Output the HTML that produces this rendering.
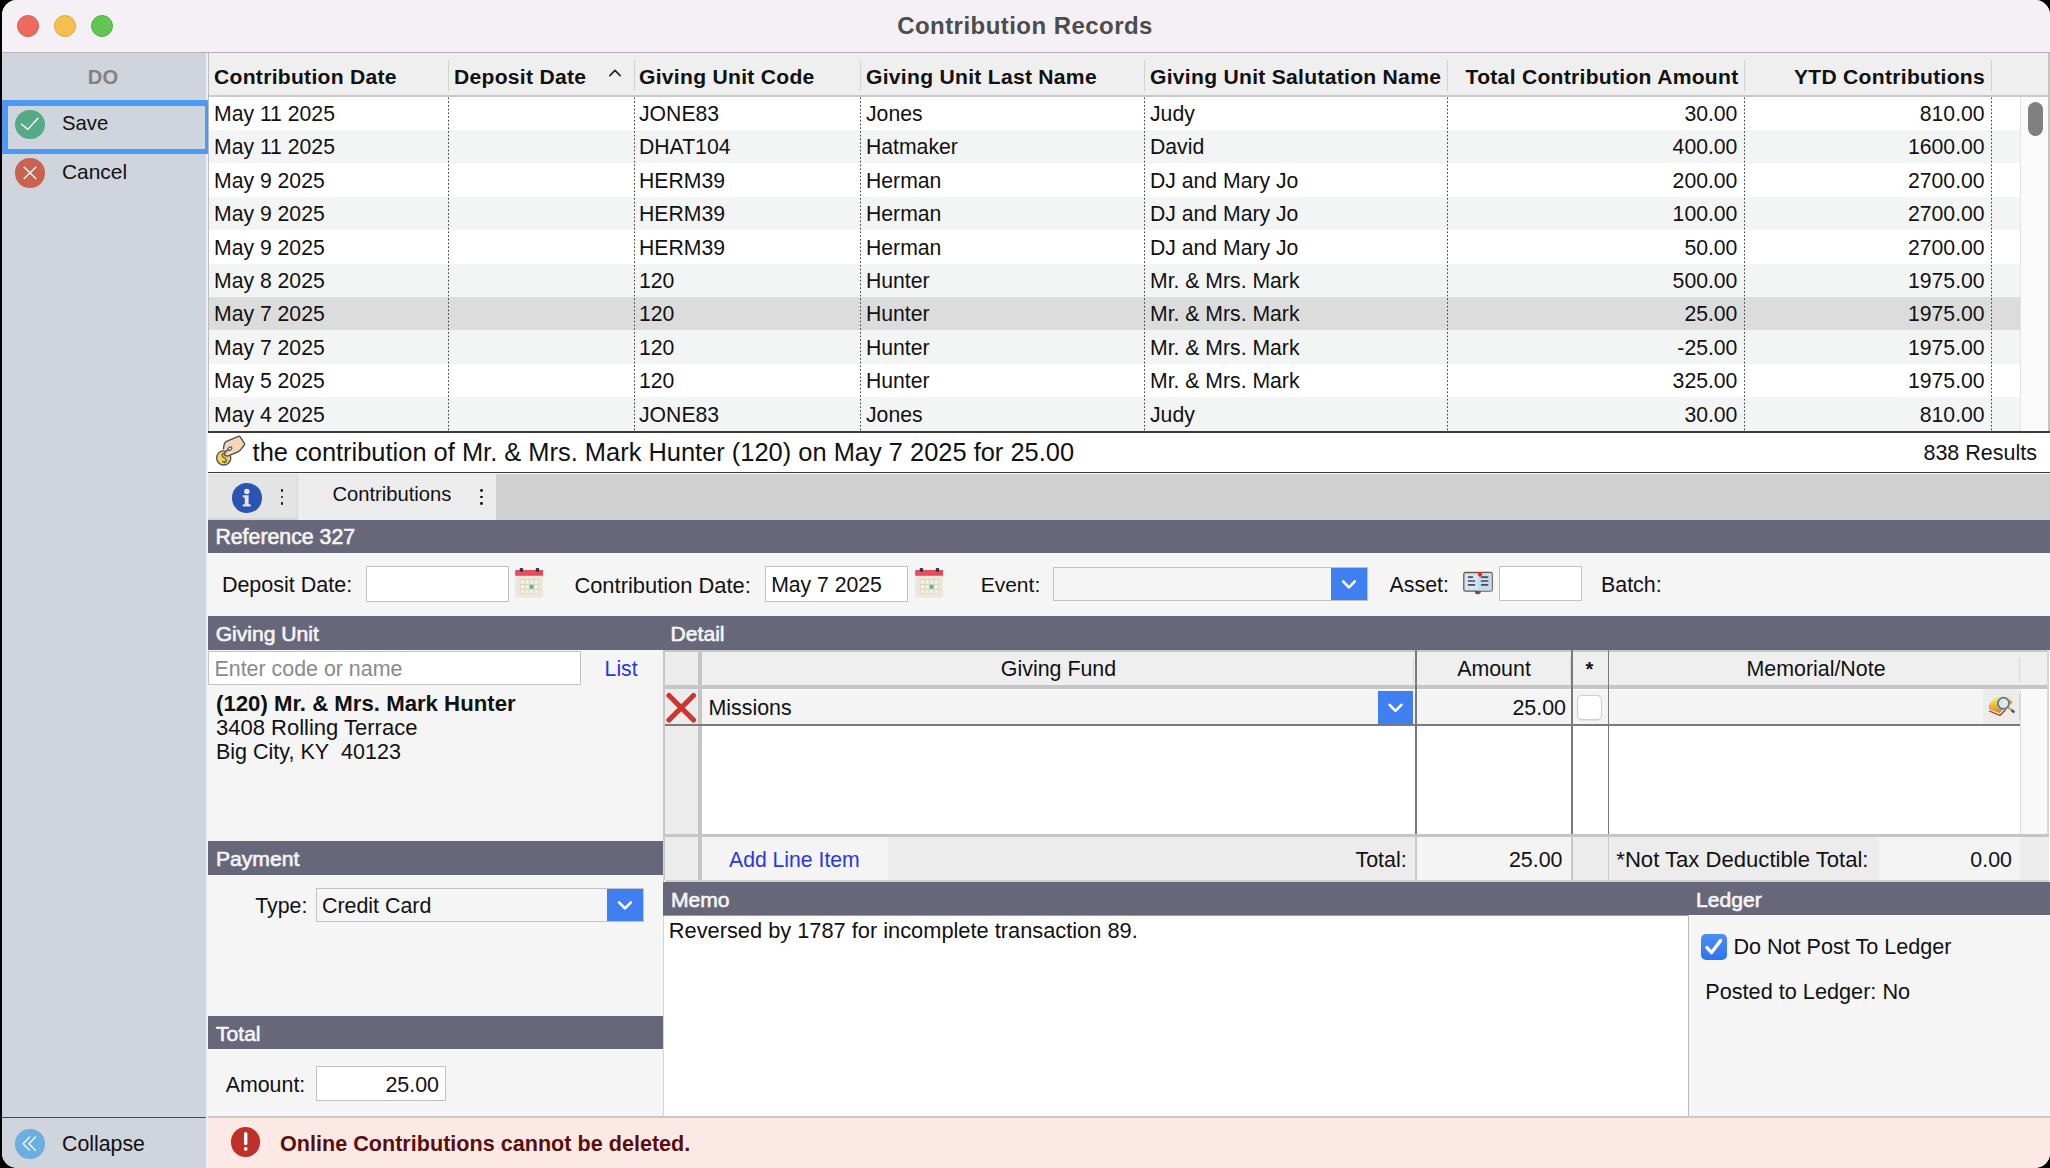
<!DOCTYPE html>
<html><head><meta charset="utf-8"><title>Contribution Records</title>
<style>
html,body{margin:0;padding:0;}
body{width:2050px;height:1168px;background:#000;position:relative;overflow:hidden;font-family:"Liberation Sans",sans-serif;color:#111;}
#clip{position:absolute;left:2px;top:0;width:2048px;height:1168px;border-radius:15px;overflow:hidden;background:#f5f5f5;}
#win{position:absolute;left:0;top:0;width:2050px;height:53px;}
.r{position:absolute;}
.t{position:absolute;white-space:nowrap;}
</style></head><body>
<div id="clip"><div style="position:absolute;left:-2px;top:0;width:2050px;height:1168px;">
<div id="win">
<div class="r" style="left:0px;top:0px;width:2050px;height:52px;background:#f4f0f5;"></div>
<div class="r" style="left:0px;top:52px;width:2050px;height:1px;background:#b4b1b6;"></div>
<div class="r" style="left:17px;top:14.5px;width:22px;height:22px;background:#ed6a5e;border-radius:50%;box-sizing:border-box;border:1px solid #d9574c;"></div>
<div class="r" style="left:54px;top:14.5px;width:22px;height:22px;background:#f5bf4f;border-radius:50%;box-sizing:border-box;border:1px solid #dfa63d;"></div>
<div class="r" style="left:91px;top:14.5px;width:22px;height:22px;background:#62c554;border-radius:50%;box-sizing:border-box;border:1px solid #50ae44;"></div>
<div class="t" style="top:11.88px;font-size:24px;line-height:27.6px;font-weight:bold;color:#4c4c4c;left:425px;width:1200px;text-align:center;letter-spacing:0.45px;">Contribution Records</div>
</div>
<div class="r" style="left:2px;top:53px;width:204px;height:1115px;background:#d0d4dc;"></div>
<div class="r" style="left:206px;top:53px;width:2px;height:1115px;background:#eef0f3;"></div>
<div class="t" style="top:66.19px;font-size:20.2px;line-height:23.23px;font-weight:bold;color:#828282;left:-497px;width:1200px;text-align:center;">DO</div>
<div class="r" style="left:2px;top:100px;width:208px;height:53.5px;box-sizing:border-box;border:5.5px solid #4b9bf6;border-top-width:6px;border-left-width:6px;"></div>
<div class="r" style="left:15.2px;top:109.6px;width:29.6px;height:29.6px;background:#57aa88;border-radius:50%;"></div>
<svg class="r" style="left:15px;top:110px" width="30" height="30" viewBox="0 0 30 30"><path d="M6.6 14.3 L12.8 19.4 L23 8.3" fill="none" stroke="#fff" stroke-width="1.4" stroke-linecap="round" stroke-linejoin="round"/></svg>
<div class="t" style="top:111.50px;font-size:20.3px;line-height:23.34px;left:62px;">Save</div>
<div class="r" style="left:15.2px;top:158.1px;width:29.6px;height:29.6px;background:#c9634f;border-radius:50%;"></div>
<svg class="r" style="left:15px;top:158px" width="30" height="30" viewBox="0 0 30 30"><path d="M9.2 9.2 L20.8 20.6 M20.8 9.2 L9.2 20.6" fill="none" stroke="#fff" stroke-width="1.4" stroke-linecap="round"/></svg>
<div class="t" style="top:159.64px;font-size:20.9px;line-height:24.03px;left:62px;">Cancel</div>
<div class="r" style="left:2px;top:1116.5px;width:204px;height:1.5px;background:#4a4a4a;"></div>
<div class="r" style="left:15px;top:1129px;width:29.5px;height:29.5px;background:#6aaee2;border-radius:50%;"></div>
<svg class="r" style="left:15px;top:1129px" width="30" height="30" viewBox="0 0 30 30"><path d="M14.6 8 L8.1 14.7 L14.6 21.4 M20.4 8 L13.9 14.7 L20.4 21.4" fill="none" stroke="#fff" stroke-width="1.3" stroke-linecap="round" stroke-linejoin="miter"/></svg>
<div class="t" style="top:1132.07px;font-size:21.3px;line-height:24.49px;left:62px;">Collapse</div>
<div class="r" style="left:208px;top:53px;width:1842px;height:378px;background:#ffffff;"></div>
<div class="r" style="left:208px;top:53px;width:1px;height:378px;background:#bdbdbd;"></div>
<div class="r" style="left:209px;top:53px;width:1841px;height:43px;background:#efefef;"></div>
<div class="r" style="left:209px;top:95px;width:1841px;height:1.5px;background:#c9c9c9;"></div>
<div class="r" style="left:2048px;top:53px;width:2px;height:378px;background:#c4c4c4;"></div>
<div class="r" style="left:448px;top:59.5px;width:1px;height:31px;background:#d2d2d2;"></div>
<div class="r" style="left:634px;top:59.5px;width:1px;height:31px;background:#d2d2d2;"></div>
<div class="r" style="left:860px;top:59.5px;width:1px;height:31px;background:#d2d2d2;"></div>
<div class="r" style="left:1144px;top:59.5px;width:1px;height:31px;background:#d2d2d2;"></div>
<div class="r" style="left:1447px;top:59.5px;width:1px;height:31px;background:#d2d2d2;"></div>
<div class="r" style="left:1744px;top:59.5px;width:1px;height:31px;background:#d2d2d2;"></div>
<div class="r" style="left:1991px;top:59.5px;width:1px;height:31px;background:#d2d2d2;"></div>
<div class="t" style="top:65.25px;font-size:21.1px;line-height:24.27px;font-weight:bold;left:214px;letter-spacing:0.28px;">Contribution Date</div>
<div class="t" style="top:65.25px;font-size:21.1px;line-height:24.27px;font-weight:bold;left:454px;letter-spacing:0.28px;">Deposit Date</div>
<div class="t" style="top:65.25px;font-size:21.1px;line-height:24.27px;font-weight:bold;left:639px;letter-spacing:0.28px;">Giving Unit Code</div>
<div class="t" style="top:65.25px;font-size:21.1px;line-height:24.27px;font-weight:bold;left:866px;letter-spacing:0.28px;">Giving Unit Last Name</div>
<div class="t" style="top:65.25px;font-size:21.1px;line-height:24.27px;font-weight:bold;left:1150px;letter-spacing:0.28px;">Giving Unit Salutation Name</div>
<div class="t" style="top:65.25px;font-size:21.1px;line-height:24.27px;font-weight:bold;right:311.5px;letter-spacing:0.28px;">Total Contribution Amount</div>
<div class="t" style="top:65.25px;font-size:21.1px;line-height:24.27px;font-weight:bold;right:65px;letter-spacing:0.28px;">YTD Contributions</div>
<svg class="r" style="left:606px;top:64px" width="18" height="16" viewBox="0 0 18 16"><path d="M3.8 11.6 L9 6.4 L14.2 11.6" fill="none" stroke="#222" stroke-width="1.6" stroke-linecap="round" stroke-linejoin="round"/></svg>
<div class="r" style="left:209px;top:96.6px;width:1811px;height:33.4px;background:#ffffff;"></div>
<div class="t" style="top:101.66px;font-size:21.2px;line-height:24.38px;left:214px;">May 11 2025</div>
<div class="t" style="top:101.66px;font-size:21.2px;line-height:24.38px;left:639px;">JONE83</div>
<div class="t" style="top:101.66px;font-size:21.2px;line-height:24.38px;left:866px;">Jones</div>
<div class="t" style="top:101.66px;font-size:21.2px;line-height:24.38px;left:1150px;">Judy</div>
<div class="t" style="top:101.66px;font-size:21.2px;line-height:24.38px;right:312.5999999999999px;">30.00</div>
<div class="t" style="top:101.66px;font-size:21.2px;line-height:24.38px;right:65.40000000000009px;">810.00</div>
<div class="r" style="left:209px;top:130.0px;width:1811px;height:33.4px;background:#f3f4f4;"></div>
<div class="t" style="top:135.13px;font-size:21.2px;line-height:24.38px;left:214px;">May 11 2025</div>
<div class="t" style="top:135.13px;font-size:21.2px;line-height:24.38px;left:639px;">DHAT104</div>
<div class="t" style="top:135.13px;font-size:21.2px;line-height:24.38px;left:866px;">Hatmaker</div>
<div class="t" style="top:135.13px;font-size:21.2px;line-height:24.38px;left:1150px;">David</div>
<div class="t" style="top:135.13px;font-size:21.2px;line-height:24.38px;right:312.5999999999999px;">400.00</div>
<div class="t" style="top:135.13px;font-size:21.2px;line-height:24.38px;right:65.40000000000009px;">1600.00</div>
<div class="r" style="left:209px;top:163.39999999999998px;width:1811px;height:33.4px;background:#ffffff;"></div>
<div class="t" style="top:168.60px;font-size:21.2px;line-height:24.38px;left:214px;">May 9 2025</div>
<div class="t" style="top:168.60px;font-size:21.2px;line-height:24.38px;left:639px;">HERM39</div>
<div class="t" style="top:168.60px;font-size:21.2px;line-height:24.38px;left:866px;">Herman</div>
<div class="t" style="top:168.60px;font-size:21.2px;line-height:24.38px;left:1150px;">DJ and Mary Jo</div>
<div class="t" style="top:168.60px;font-size:21.2px;line-height:24.38px;right:312.5999999999999px;">200.00</div>
<div class="t" style="top:168.60px;font-size:21.2px;line-height:24.38px;right:65.40000000000009px;">2700.00</div>
<div class="r" style="left:209px;top:196.79999999999998px;width:1811px;height:33.4px;background:#f3f4f4;"></div>
<div class="t" style="top:202.07px;font-size:21.2px;line-height:24.38px;left:214px;">May 9 2025</div>
<div class="t" style="top:202.07px;font-size:21.2px;line-height:24.38px;left:639px;">HERM39</div>
<div class="t" style="top:202.07px;font-size:21.2px;line-height:24.38px;left:866px;">Herman</div>
<div class="t" style="top:202.07px;font-size:21.2px;line-height:24.38px;left:1150px;">DJ and Mary Jo</div>
<div class="t" style="top:202.07px;font-size:21.2px;line-height:24.38px;right:312.5999999999999px;">100.00</div>
<div class="t" style="top:202.07px;font-size:21.2px;line-height:24.38px;right:65.40000000000009px;">2700.00</div>
<div class="r" style="left:209px;top:230.2px;width:1811px;height:33.4px;background:#ffffff;"></div>
<div class="t" style="top:235.54px;font-size:21.2px;line-height:24.38px;left:214px;">May 9 2025</div>
<div class="t" style="top:235.54px;font-size:21.2px;line-height:24.38px;left:639px;">HERM39</div>
<div class="t" style="top:235.54px;font-size:21.2px;line-height:24.38px;left:866px;">Herman</div>
<div class="t" style="top:235.54px;font-size:21.2px;line-height:24.38px;left:1150px;">DJ and Mary Jo</div>
<div class="t" style="top:235.54px;font-size:21.2px;line-height:24.38px;right:312.5999999999999px;">50.00</div>
<div class="t" style="top:235.54px;font-size:21.2px;line-height:24.38px;right:65.40000000000009px;">2700.00</div>
<div class="r" style="left:209px;top:263.6px;width:1811px;height:33.4px;background:#f3f4f4;"></div>
<div class="t" style="top:269.01px;font-size:21.2px;line-height:24.38px;left:214px;">May 8 2025</div>
<div class="t" style="top:269.01px;font-size:21.2px;line-height:24.38px;left:639px;">120</div>
<div class="t" style="top:269.01px;font-size:21.2px;line-height:24.38px;left:866px;">Hunter</div>
<div class="t" style="top:269.01px;font-size:21.2px;line-height:24.38px;left:1150px;">Mr. &amp; Mrs. Mark</div>
<div class="t" style="top:269.01px;font-size:21.2px;line-height:24.38px;right:312.5999999999999px;">500.00</div>
<div class="t" style="top:269.01px;font-size:21.2px;line-height:24.38px;right:65.40000000000009px;">1975.00</div>
<div class="r" style="left:209px;top:297.0px;width:1811px;height:33.4px;background:#dcdcdc;"></div>
<div class="t" style="top:302.48px;font-size:21.2px;line-height:24.38px;left:214px;">May 7 2025</div>
<div class="t" style="top:302.48px;font-size:21.2px;line-height:24.38px;left:639px;">120</div>
<div class="t" style="top:302.48px;font-size:21.2px;line-height:24.38px;left:866px;">Hunter</div>
<div class="t" style="top:302.48px;font-size:21.2px;line-height:24.38px;left:1150px;">Mr. &amp; Mrs. Mark</div>
<div class="t" style="top:302.48px;font-size:21.2px;line-height:24.38px;right:312.5999999999999px;">25.00</div>
<div class="t" style="top:302.48px;font-size:21.2px;line-height:24.38px;right:65.40000000000009px;">1975.00</div>
<div class="r" style="left:209px;top:330.4px;width:1811px;height:33.4px;background:#f3f4f4;"></div>
<div class="t" style="top:335.95px;font-size:21.2px;line-height:24.38px;left:214px;">May 7 2025</div>
<div class="t" style="top:335.95px;font-size:21.2px;line-height:24.38px;left:639px;">120</div>
<div class="t" style="top:335.95px;font-size:21.2px;line-height:24.38px;left:866px;">Hunter</div>
<div class="t" style="top:335.95px;font-size:21.2px;line-height:24.38px;left:1150px;">Mr. &amp; Mrs. Mark</div>
<div class="t" style="top:335.95px;font-size:21.2px;line-height:24.38px;right:312.5999999999999px;">-25.00</div>
<div class="t" style="top:335.95px;font-size:21.2px;line-height:24.38px;right:65.40000000000009px;">1975.00</div>
<div class="r" style="left:209px;top:363.79999999999995px;width:1811px;height:33.4px;background:#ffffff;"></div>
<div class="t" style="top:369.42px;font-size:21.2px;line-height:24.38px;left:214px;">May 5 2025</div>
<div class="t" style="top:369.42px;font-size:21.2px;line-height:24.38px;left:639px;">120</div>
<div class="t" style="top:369.42px;font-size:21.2px;line-height:24.38px;left:866px;">Hunter</div>
<div class="t" style="top:369.42px;font-size:21.2px;line-height:24.38px;left:1150px;">Mr. &amp; Mrs. Mark</div>
<div class="t" style="top:369.42px;font-size:21.2px;line-height:24.38px;right:312.5999999999999px;">325.00</div>
<div class="t" style="top:369.42px;font-size:21.2px;line-height:24.38px;right:65.40000000000009px;">1975.00</div>
<div class="r" style="left:209px;top:397.19999999999993px;width:1811px;height:33.4px;background:#f3f4f4;"></div>
<div class="t" style="top:402.89px;font-size:21.2px;line-height:24.38px;left:214px;">May 4 2025</div>
<div class="t" style="top:402.89px;font-size:21.2px;line-height:24.38px;left:639px;">JONE83</div>
<div class="t" style="top:402.89px;font-size:21.2px;line-height:24.38px;left:866px;">Jones</div>
<div class="t" style="top:402.89px;font-size:21.2px;line-height:24.38px;left:1150px;">Judy</div>
<div class="t" style="top:402.89px;font-size:21.2px;line-height:24.38px;right:312.5999999999999px;">30.00</div>
<div class="t" style="top:402.89px;font-size:21.2px;line-height:24.38px;right:65.40000000000009px;">810.00</div>
<svg class="r" style="left:446px;top:97px" width="4" height="334"><line x1="2.5" y1="0.6" x2="2.5" y2="334" stroke="#3a3a3a" stroke-width="1" stroke-dasharray="1.6 2.12"/></svg>
<svg class="r" style="left:632px;top:97px" width="4" height="334"><line x1="2.5" y1="0.6" x2="2.5" y2="334" stroke="#3a3a3a" stroke-width="1" stroke-dasharray="1.6 2.12"/></svg>
<svg class="r" style="left:858px;top:97px" width="4" height="334"><line x1="2.5" y1="0.6" x2="2.5" y2="334" stroke="#3a3a3a" stroke-width="1" stroke-dasharray="1.6 2.12"/></svg>
<svg class="r" style="left:1142px;top:97px" width="4" height="334"><line x1="2.5" y1="0.6" x2="2.5" y2="334" stroke="#3a3a3a" stroke-width="1" stroke-dasharray="1.6 2.12"/></svg>
<svg class="r" style="left:1445px;top:97px" width="4" height="334"><line x1="2.5" y1="0.6" x2="2.5" y2="334" stroke="#3a3a3a" stroke-width="1" stroke-dasharray="1.6 2.12"/></svg>
<svg class="r" style="left:1742px;top:97px" width="4" height="334"><line x1="2.5" y1="0.6" x2="2.5" y2="334" stroke="#3a3a3a" stroke-width="1" stroke-dasharray="1.6 2.12"/></svg>
<svg class="r" style="left:1989px;top:97px" width="4" height="334"><line x1="2.5" y1="0.6" x2="2.5" y2="334" stroke="#3a3a3a" stroke-width="1" stroke-dasharray="1.6 2.12"/></svg>
<div class="r" style="left:2020px;top:96.5px;width:28px;height:334.5px;background:#fafafa;"></div>
<div class="r" style="left:2020px;top:96.5px;width:1px;height:334.5px;background:#e3e3e3;"></div>
<div class="r" style="left:2028px;top:102px;width:15px;height:33.5px;background:#808080;border-radius:8px;"></div>
<div class="r" style="left:208px;top:431px;width:1842px;height:1.6px;background:#3a3a3a;"></div>
<div class="r" style="left:208px;top:432.5px;width:1842px;height:39.5px;background:#ffffff;"></div>
<div class="r" style="left:208px;top:471.7px;width:1842px;height:1.6px;background:#3a3a3a;"></div>
<svg class="r" style="left:205px;top:430px" width="50" height="45" viewBox="205 430 50 45">
<circle cx="223.7" cy="457.9" r="7.1" fill="#f6d24c" stroke="#4a525c" stroke-width="1.3"/>
<path d="M225.6 454.6 C224.6 452.9 221.6 453.3 222.2 455.8 C222.8 457.9 226.8 457.8 226.4 460.6 C226 462.6 223 462.4 222.2 461" fill="none" stroke="#4a525c" stroke-width="1.25"/>
<path d="M224.6 461.6 V463.2" stroke="#4a525c" stroke-width="1.2"/>
<path d="M223.4 449.5 C223.6 446 224.2 443 226 441.6 L237.7 436.6 C238.8 436 239.6 436 240.2 436.8 L244.4 443.3 C244.8 444 244.7 444.6 244.2 445.2 L239.8 450.6 C238 452.3 236.6 452.8 234.8 453.2 L229 455.6 C227.2 456.2 225.2 456.2 224.6 454.8 C224 453.4 225 452.2 226.4 451 L228.2 449.4" fill="#f4d7b8" stroke="#4a525c" stroke-width="1.4" stroke-linejoin="round"/>
<ellipse cx="229.9" cy="448.6" rx="2.3" ry="1.3" transform="rotate(-35 229.9 448.6)" fill="#ffffff" stroke="#4a525c" stroke-width="1.2"/>
</svg>
<div class="t" style="top:437.85px;font-size:25.45px;line-height:29.27px;left:252.6px;">the contribution of Mr. &amp; Mrs. Mark Hunter (120) on May 7 2025 for 25.00</div>
<div class="t" style="top:441.49px;font-size:21.5px;line-height:24.72px;right:13px;">838 Results</div>
<div class="r" style="left:208px;top:473.5px;width:1842px;height:46.5px;background:#d0d0d0;"></div>
<div class="r" style="left:208px;top:473.5px;width:89.5px;height:46.5px;background:#e4e4e4;"></div>
<div class="r" style="left:297.5px;top:473.5px;width:198.5px;height:46.5px;background:#ececec;"></div>
<div class="r" style="left:208px;top:518px;width:89.5px;height:2px;background:#d6d6d6;"></div>
<div class="r" style="left:296.5px;top:475px;width:1.2px;height:45px;background:#d4d4d4;"></div>
<div class="r" style="left:232.0px;top:483.0px;width:29.6px;height:29.6px;background:#2a53b2;border-radius:50%;"></div>
<svg class="r" style="left:232px;top:483px" width="30" height="30" viewBox="0 0 30 30"><circle cx="14.8" cy="8.4" r="2.7" fill="#e6e6e6"/><path d="M10.8 12.2 H16.6 V21.2 H18.6 V23.4 H10.8 V21.2 H12.8 V14.4 H10.8 Z" fill="#e6e6e6"/></svg>
<div class="r" style="left:280.55px;top:488.75px;width:2.9px;height:2.9px;background:#111;border-radius:50%;"></div>
<div class="r" style="left:280.55px;top:495.55px;width:2.9px;height:2.9px;background:#111;border-radius:50%;"></div>
<div class="r" style="left:280.55px;top:502.35px;width:2.9px;height:2.9px;background:#111;border-radius:50%;"></div>
<div class="r" style="left:480.15000000000003px;top:488.75px;width:2.9px;height:2.9px;background:#111;border-radius:50%;"></div>
<div class="r" style="left:480.15000000000003px;top:495.55px;width:2.9px;height:2.9px;background:#111;border-radius:50%;"></div>
<div class="r" style="left:480.15000000000003px;top:502.35px;width:2.9px;height:2.9px;background:#111;border-radius:50%;"></div>
<div class="t" style="top:483.09px;font-size:20.2px;line-height:23.23px;left:332.4px;">Contributions</div>
<div class="r" style="left:208px;top:520px;width:1842px;height:33px;background:#686779;"></div>
<div class="t" style="top:525.27px;font-size:21.3px;line-height:24.49px;color:#f4f4f6;left:215.4px;-webkit-text-stroke:0.65px #f4f4f6;">Reference 327</div>
<div class="r" style="left:208px;top:553px;width:1842px;height:63px;background:#f5f5f5;"></div>
<div class="t" style="top:572.89px;font-size:21.5px;line-height:24.72px;left:221.9px;">Deposit Date:</div>
<div class="r" style="left:366px;top:566px;width:143px;height:36px;background:#ffffff;box-sizing:border-box;border:1px solid #c2c2c2;"></div>
<svg class="r" style="left:515px;top:568px" width="30" height="31" viewBox="0 0 30 31">
<rect x="0.2" y="7.8" width="27.8" height="21.8" fill="#ebe8da"/>
<rect x="4.8" y="11.3" width="18.9" height="14.6" fill="#d9d3bd"/>
<rect x="5.60" y="12.20" width="3.6" height="3.75" fill="#f3f0e4"/><rect x="10.20" y="12.20" width="3.6" height="3.75" fill="#f3f0e4"/><rect x="14.80" y="12.20" width="3.6" height="3.75" fill="#f3f0e4"/><rect x="19.40" y="12.20" width="3.6" height="3.75" fill="#f3f0e4"/><rect x="5.60" y="16.95" width="3.6" height="3.75" fill="#f3f0e4"/><rect x="10.20" y="16.95" width="3.6" height="3.75" fill="#f3f0e4"/><rect x="14.80" y="16.95" width="3.6" height="3.75" fill="#4db897"/><rect x="19.40" y="16.95" width="3.6" height="3.75" fill="#f3f0e4"/><rect x="5.60" y="21.70" width="3.6" height="3.75" fill="#f3f0e4"/><rect x="10.20" y="21.70" width="3.6" height="3.75" fill="#f3f0e4"/><rect x="14.80" y="21.70" width="3.6" height="3.75" fill="#f3f0e4"/><rect x="19.40" y="21.70" width="3.6" height="3.75" fill="#f3f0e4"/>
<rect x="0.2" y="2" width="27.8" height="5.8" fill="#e84a5a"/>
<rect x="4.8" y="0.1" width="3.3" height="3.5" fill="#25324a"/>
<rect x="20.8" y="0.1" width="3.3" height="3.5" fill="#25324a"/>
</svg>
<div class="t" style="top:572.52px;font-size:21.9px;line-height:25.18px;left:574.4px;">Contribution Date:</div>
<div class="r" style="left:765px;top:566px;width:143px;height:36px;background:#ffffff;box-sizing:border-box;border:1px solid #c2c2c2;"></div>
<div class="t" style="top:573.16px;font-size:21.2px;line-height:24.38px;left:771.2px;">May 7 2025</div>
<svg class="r" style="left:914.5px;top:568px" width="30" height="31" viewBox="0 0 30 31">
<rect x="0.2" y="7.8" width="27.8" height="21.8" fill="#ebe8da"/>
<rect x="4.8" y="11.3" width="18.9" height="14.6" fill="#d9d3bd"/>
<rect x="5.60" y="12.20" width="3.6" height="3.75" fill="#f3f0e4"/><rect x="10.20" y="12.20" width="3.6" height="3.75" fill="#f3f0e4"/><rect x="14.80" y="12.20" width="3.6" height="3.75" fill="#f3f0e4"/><rect x="19.40" y="12.20" width="3.6" height="3.75" fill="#f3f0e4"/><rect x="5.60" y="16.95" width="3.6" height="3.75" fill="#f3f0e4"/><rect x="10.20" y="16.95" width="3.6" height="3.75" fill="#f3f0e4"/><rect x="14.80" y="16.95" width="3.6" height="3.75" fill="#4db897"/><rect x="19.40" y="16.95" width="3.6" height="3.75" fill="#f3f0e4"/><rect x="5.60" y="21.70" width="3.6" height="3.75" fill="#f3f0e4"/><rect x="10.20" y="21.70" width="3.6" height="3.75" fill="#f3f0e4"/><rect x="14.80" y="21.70" width="3.6" height="3.75" fill="#f3f0e4"/><rect x="19.40" y="21.70" width="3.6" height="3.75" fill="#f3f0e4"/>
<rect x="0.2" y="2" width="27.8" height="5.8" fill="#e84a5a"/>
<rect x="4.8" y="0.1" width="3.3" height="3.5" fill="#25324a"/>
<rect x="20.8" y="0.1" width="3.3" height="3.5" fill="#25324a"/>
</svg>
<div class="t" style="top:573.35px;font-size:21px;line-height:24.15px;left:980.7px;">Event:</div>
<div class="r" style="left:1053px;top:566.5px;width:315px;height:34.5px;background:#f5f5f5;box-sizing:border-box;border:1.6px solid #c2c2c2;"></div>
<div class="r" style="left:1331px;top:568px;width:36px;height:32px;background:#3f7ff0;"></div>
<svg class="r" style="left:1331px;top:568px" width="36" height="32" viewBox="0 0 36 32"><path d="M12.1 13.4 L18.0 19.4 L23.9 13.4" fill="none" stroke="#fff" stroke-width="2.6" stroke-linecap="round" stroke-linejoin="round"/></svg>
<div class="t" style="top:572.98px;font-size:21.4px;line-height:24.61px;left:1389.5px;">Asset:</div>
<svg class="r" style="left:1460px;top:568px" width="36" height="28" viewBox="1460 568 36 28">
<circle cx="1477.8" cy="591.2" r="3.1" fill="#6a5a42"/>
<rect x="1463.8" y="572.5" width="28.4" height="18.6" rx="1.6" fill="#d3e5f6" stroke="#6f5c40" stroke-width="1.3"/>
<rect x="1478" y="573.2" width="13.5" height="17.3" fill="#c3dbf2"/>
<path d="M1478 572 H1482 V575.6 L1480 577 L1478 575.6 Z" fill="#d23a1e"/>
<g stroke="#4a4a52" stroke-width="1.7" stroke-linecap="round">
<path d="M1468.6 577.1 H1472.4 M1468.6 581 H1474.5 M1468.6 584.9 H1474.5 M1481.6 577.1 H1487.6 M1481.6 581 H1487.6 M1481.6 584.9 H1487.6"/>
</g>
</svg>
<div class="r" style="left:1498.8px;top:566px;width:83.0px;height:35.299999999999955px;background:#ffffff;box-sizing:border-box;border:1px solid #c2c2c2;"></div>
<div class="t" style="top:572.98px;font-size:21.4px;line-height:24.61px;left:1601px;">Batch:</div>
<div class="r" style="left:208px;top:616px;width:1842px;height:34px;background:#686779;"></div>
<div class="t" style="top:621.75px;font-size:21.1px;line-height:24.27px;color:#f4f4f6;left:215.7px;-webkit-text-stroke:0.65px #f4f4f6;">Giving Unit</div>
<div class="t" style="top:621.75px;font-size:21.1px;line-height:24.27px;color:#f4f4f6;left:670.6px;-webkit-text-stroke:0.65px #f4f4f6;">Detail</div>
<div class="r" style="left:208px;top:650px;width:455.5px;height:191px;background:#f5f5f5;"></div>
<div class="r" style="left:208.4px;top:650.6px;width:372.6px;height:34.19999999999993px;background:#ffffff;box-sizing:border-box;border:1px solid #c2c2c2;"></div>
<div class="t" style="top:656.98px;font-size:21.4px;line-height:24.61px;color:#8a8a8a;left:214.5px;">Enter code or name</div>
<div class="t" style="top:657.16px;font-size:21.2px;line-height:24.38px;color:#2737e4;left:604.6px;">List</div>
<div class="t" style="top:691.24px;font-size:22.2px;line-height:25.53px;font-weight:bold;left:216px;">(120) Mr. &amp; Mrs. Mark Hunter</div>
<div class="t" style="top:715.23px;font-size:22px;line-height:25.3px;left:216px;">3408 Rolling Terrace</div>
<div class="t" style="top:740.09px;font-size:21.5px;line-height:24.72px;left:216px;">Big City, KY&nbsp; 40123</div>
<div class="r" style="left:663.5px;top:650px;width:1386.5px;height:232px;background:#ffffff;"></div>
<div class="r" style="left:663px;top:650px;width:2px;height:230px;background:#c6c6c6;"></div>
<div class="r" style="left:664.5px;top:650px;width:1384px;height:35.5px;background:#efefef;"></div>
<div class="r" style="left:664.5px;top:650px;width:34px;height:230px;background:#ececec;"></div>
<div class="r" style="left:698px;top:650px;width:4px;height:230px;background:#c5c5c5;"></div>
<div class="r" style="left:664.5px;top:685px;width:1384px;height:4px;background:#c5c5c5;"></div>
<div class="r" style="left:663px;top:650px;width:1385px;height:2px;background:#c6c6c6;"></div>
<div class="r" style="left:702px;top:690px;width:1318px;height:35px;background:#f4f4f4;"></div>
<div class="r" style="left:664.5px;top:724px;width:1355.5px;height:1.6px;background:#7a7a7a;"></div>
<div class="r" style="left:2020px;top:690px;width:28px;height:145px;background:#f8f8f8;"></div>
<div class="r" style="left:2020px;top:690px;width:1px;height:145px;background:#dedede;"></div>
<div class="r" style="left:2047px;top:650px;width:1.5px;height:230px;background:#d6d6d6;"></div>
<div class="r" style="left:1415px;top:650px;width:1.6px;height:230px;background:#7a7a7a;"></div>
<div class="r" style="left:1571.2px;top:650px;width:1.6px;height:230px;background:#7a7a7a;"></div>
<div class="r" style="left:1607.7px;top:650px;width:1.6px;height:230px;background:#7a7a7a;"></div>
<div class="r" style="left:1413.2px;top:657px;width:1px;height:26px;background:#d8d8d8;"></div>
<div class="r" style="left:1569.5px;top:657px;width:1px;height:26px;background:#d8d8d8;"></div>
<div class="r" style="left:2019px;top:657px;width:1px;height:26px;background:#d8d8d8;"></div>
<div class="t" style="top:656.98px;font-size:21.4px;line-height:24.61px;left:458.5px;width:1200px;text-align:center;">Giving Fund</div>
<div class="t" style="top:656.98px;font-size:21.4px;line-height:24.61px;left:894px;width:1200px;text-align:center;">Amount</div>
<div class="t" style="top:657.77px;font-size:20px;line-height:23.0px;font-weight:bold;left:989.5px;width:1200px;text-align:center;">*</div>
<div class="t" style="top:656.98px;font-size:21.4px;line-height:24.61px;left:1216px;width:1200px;text-align:center;">Memorial/Note</div>
<svg class="r" style="left:666px;top:692px" width="32" height="32" viewBox="0 0 32 32"><path d="M3 3.5 L27.5 28 M27.5 3.5 L3 28" fill="none" stroke="#cf3430" stroke-width="5.2" stroke-linecap="round"/></svg>
<div class="t" style="top:695.98px;font-size:21.4px;line-height:24.61px;left:708.5px;">Missions</div>
<div class="r" style="left:1378px;top:691.2px;width:35px;height:32.8px;background:#3f7ff0;"></div>
<svg class="r" style="left:1378px;top:691.2px" width="35" height="32.8" viewBox="0 0 35 32.8"><path d="M11.6 13.799999999999999 L17.5 19.799999999999997 L23.4 13.799999999999999" fill="none" stroke="#fff" stroke-width="2.6" stroke-linecap="round" stroke-linejoin="round"/></svg>
<div class="t" style="top:695.98px;font-size:21.4px;line-height:24.61px;right:484px;">25.00</div>
<div class="r" style="left:1577.2px;top:694.6px;width:25.3px;height:25.4px;background:#ffffff;box-sizing:border-box;border:1px solid #cfcfcf;border-radius:5px;box-shadow:0 0.5px 1px rgba(0,0,0,0.08);"></div>
<div class="r" style="left:1983px;top:689px;width:37px;height:35px;background:#ececec;"></div>
<div class="r" style="left:2019px;top:694px;width:1px;height:26px;background:#d0d0d0;"></div>
<svg class="r" style="left:1985px;top:692px" width="32" height="27" viewBox="1985 692 32 27">
<defs><linearGradient id="bk" x1="0" y1="0" x2="0" y2="1"><stop offset="0" stop-color="#fff06a"/><stop offset="0.55" stop-color="#f2b63c"/><stop offset="1" stop-color="#de7f22"/></linearGradient></defs>
<path d="M2009.5 699.5 L2012.8 701.6 L2011 704.8 L2008.8 703.6 Z" fill="#e2a431"/>
<path d="M1989 704.3 L1996 697 L2009.6 696.5 L2009.8 700.5 L2004.5 708.6 L1999.8 713.4 L1989 709.4 Z" fill="url(#bk)"/>
<path d="M1989.4 709.7 L1999.6 713.9 L2004.8 708.6" fill="none" stroke="#f4f0f0" stroke-width="1.2"/>
<path d="M1989.2 710.8 L2000 715.3 L2005.8 709.4" fill="none" stroke="#b9441c" stroke-width="1.4"/>
<path d="M2008.2 707.6 L2013 711.2" stroke="#e1b03a" stroke-width="2.6" stroke-linecap="round"/>
<path d="M2012.2 710.6 L2013.6 711.7" stroke="#2f5a8a" stroke-width="2.4" stroke-linecap="round"/>
<circle cx="2003.5" cy="703.3" r="5.6" fill="#eee0d4" stroke="#3b7db6" stroke-width="1.7"/>
<path d="M2006 699.6 L2002.6 705.8" stroke="#ffffff" stroke-width="0.9" opacity="0.8"/>
</svg>
<div class="r" style="left:664.5px;top:834px;width:1384px;height:2.8px;background:#c5c5c5;"></div>
<div class="r" style="left:664.5px;top:837px;width:1384px;height:43px;background:#ececec;"></div>
<div class="r" style="left:664.5px;top:837px;width:34px;height:43px;background:#ececec;"></div>
<div class="r" style="left:702px;top:837px;width:186px;height:43px;background:#f4f4f4;"></div>
<div class="r" style="left:1416.6px;top:837px;width:154.6px;height:43px;background:#f4f4f4;"></div>
<div class="r" style="left:1878.6px;top:837px;width:141.4px;height:43px;background:#f4f4f4;"></div>
<div class="r" style="left:664.5px;top:880px;width:1384px;height:2px;background:#d0d0d0;"></div>
<div class="r" style="left:698px;top:837px;width:4px;height:43px;background:#c5c5c5;"></div>
<div class="r" style="left:1415px;top:837px;width:1.6px;height:43px;background:#c8c8c8;"></div>
<div class="r" style="left:1571.2px;top:837px;width:1.6px;height:43px;background:#c8c8c8;"></div>
<div class="r" style="left:1607.7px;top:837px;width:1.6px;height:43px;background:#c8c8c8;"></div>
<div class="t" style="top:848.16px;font-size:21.2px;line-height:24.38px;color:#2737e4;left:729px;">Add Line Item</div>
<div class="t" style="top:847.98px;font-size:21.4px;line-height:24.61px;right:643.4000000000001px;">Total:</div>
<div class="t" style="top:847.98px;font-size:21.4px;line-height:24.61px;right:487.5px;">25.00</div>
<div class="t" style="top:847.34px;font-size:22.1px;line-height:25.41px;left:1616.3px;">*Not Tax Deductible Total:</div>
<div class="t" style="top:847.98px;font-size:21.4px;line-height:24.61px;right:38px;">0.00</div>
<div class="r" style="left:208px;top:841px;width:455.5px;height:33.5px;background:#686779;"></div>
<div class="t" style="top:846.75px;font-size:21.1px;line-height:24.27px;color:#f4f4f6;left:216px;-webkit-text-stroke:0.65px #f4f4f6;">Payment</div>
<div class="r" style="left:208px;top:874.5px;width:455.5px;height:142px;background:#f5f5f5;"></div>
<div class="t" style="top:894.07px;font-size:21.3px;line-height:24.49px;right:1742.7px;">Type:</div>
<div class="r" style="left:316px;top:887.5px;width:328px;height:34px;background:#f5f5f5;box-sizing:border-box;border:1.6px solid #c2c2c2;"></div>
<div class="t" style="top:893.98px;font-size:21.4px;line-height:24.61px;left:322px;">Credit Card</div>
<div class="r" style="left:607px;top:888.8px;width:36px;height:32px;background:#3f7ff0;"></div>
<svg class="r" style="left:607px;top:888.8px" width="36" height="32" viewBox="0 0 36 32"><path d="M12.1 13.4 L18.0 19.4 L23.9 13.4" fill="none" stroke="#fff" stroke-width="2.6" stroke-linecap="round" stroke-linejoin="round"/></svg>
<div class="r" style="left:208px;top:1016px;width:455.5px;height:33px;background:#686779;"></div>
<div class="t" style="top:1021.75px;font-size:21.1px;line-height:24.27px;color:#f4f4f6;left:216px;-webkit-text-stroke:0.65px #f4f4f6;">Total</div>
<div class="r" style="left:208px;top:1049px;width:455.5px;height:67px;background:#f5f5f5;"></div>
<div class="t" style="top:1072.98px;font-size:21.4px;line-height:24.61px;right:1744.7px;">Amount:</div>
<div class="r" style="left:316px;top:1066.3px;width:130px;height:34.700000000000045px;background:#ffffff;box-sizing:border-box;border:1px solid #c2c2c2;"></div>
<div class="t" style="top:1072.98px;font-size:21.4px;line-height:24.61px;right:1611px;">25.00</div>
<div class="r" style="left:663px;top:841px;width:1px;height:275px;background:#d4d4d4;"></div>
<div class="r" style="left:663px;top:882px;width:1387px;height:33px;background:#686779;"></div>
<div class="t" style="top:887.75px;font-size:21.1px;line-height:24.27px;color:#f4f4f6;left:671px;-webkit-text-stroke:0.65px #f4f4f6;">Memo</div>
<div class="t" style="top:887.75px;font-size:21.1px;line-height:24.27px;color:#f4f4f6;left:1696px;-webkit-text-stroke:0.65px #f4f4f6;">Ledger</div>
<div class="r" style="left:664px;top:915px;width:1023.5px;height:201px;background:#ffffff;"></div>
<div class="t" style="top:918.11px;font-size:21.8px;line-height:25.07px;left:668.8px;">Reversed by 1787 for incomplete transaction 89.</div>
<div class="r" style="left:663px;top:915px;width:1025px;height:1.2px;background:#9c9ba5;"></div>
<div class="r" style="left:1687.5px;top:915px;width:1.2px;height:201px;background:#b9b9b9;"></div>
<div class="r" style="left:1688.7px;top:915px;width:361.3px;height:201px;background:#f5f5f5;"></div>
<div class="r" style="left:1701px;top:934.3px;width:25.5px;height:25.5px;background:#3b82f6;border-radius:5px;background:linear-gradient(#4a8ef8,#2f74ee);"></div>
<svg class="r" style="left:1701px;top:934.3px" width="26" height="26" viewBox="0 0 26 26"><path d="M6 13.6 L10.6 18.6 L19.6 6.6" fill="none" stroke="#fff" stroke-width="3.4" stroke-linecap="round" stroke-linejoin="round"/></svg>
<div class="t" style="top:934.80px;font-size:21.6px;line-height:24.84px;left:1733.4px;">Do Not Post To Ledger</div>
<div class="t" style="top:979.71px;font-size:21.7px;line-height:24.95px;left:1705.2px;">Posted to Ledger: No</div>
<div class="r" style="left:208px;top:1115.5px;width:1842px;height:2px;background:#c9c9c9;"></div>
<div class="r" style="left:208px;top:1117.5px;width:1842px;height:50.5px;background:#fce9e6;"></div>
<div class="r" style="left:230.5px;top:1127.2px;width:29.4px;height:29.4px;background:#c0302a;border-radius:50%;"></div>
<svg class="r" style="left:230.5px;top:1127.2px" width="30" height="30" viewBox="0 0 30 30"><path d="M14.7 6.8 V16.5" stroke="#fff" stroke-width="3.4" stroke-linecap="round"/><circle cx="14.7" cy="21.8" r="1.9" fill="#fff"/></svg>
<div class="t" style="top:1131.60px;font-size:21.6px;line-height:24.84px;font-weight:bold;color:#5a0e0a;left:280px;">Online Contributions cannot be deleted.</div>

</div></div>
</body></html>
